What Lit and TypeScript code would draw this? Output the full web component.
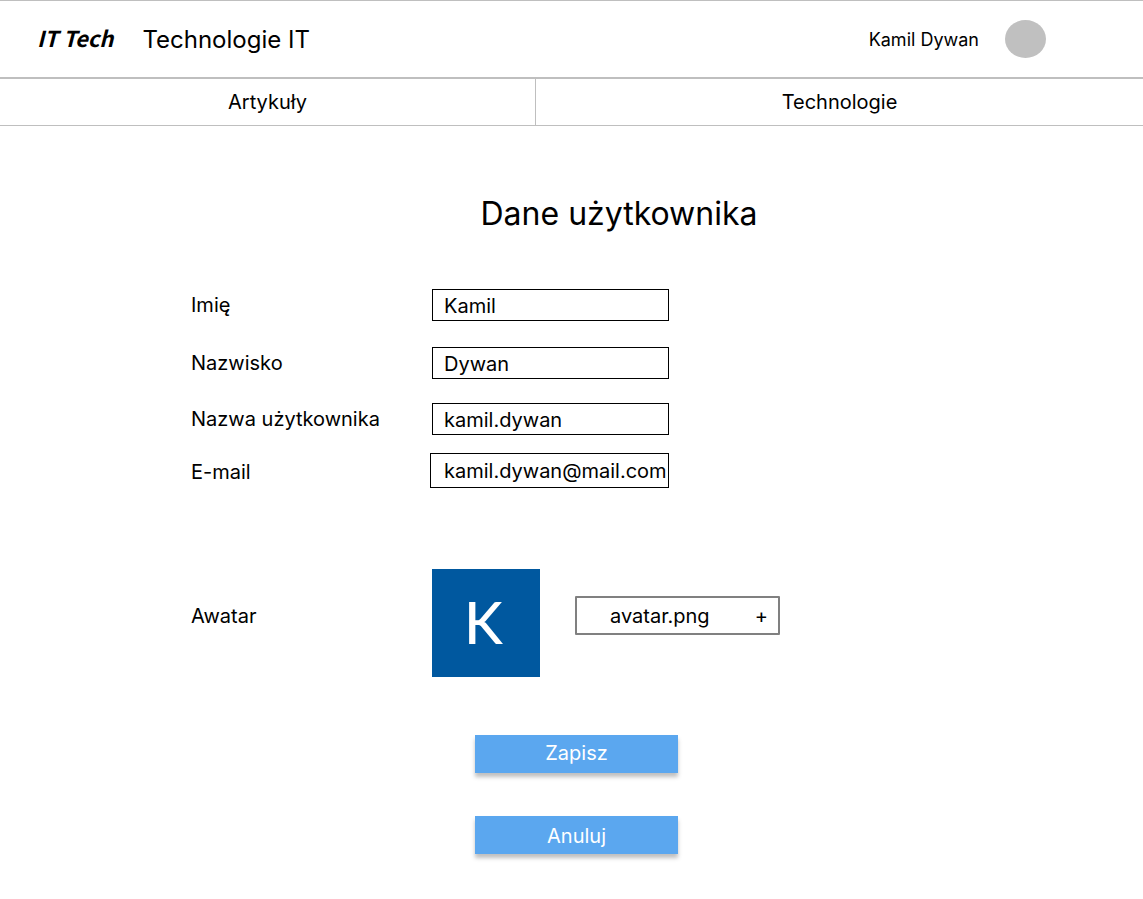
import { LitElement, html, css } from "lit";
import { customElement, state } from "lit/decorators.js";

interface Field {
  id: string;
  label: string;
  type: string;
  value: string;
}

const fields: Field[] = [
  { id: "first-name", label: "Imię", type: "text", value: "Kamil" },
  { id: "last-name", label: "Nazwisko", type: "text", value: "Dywan" },
  { id: "username", label: "Nazwa użytkownika", type: "text", value: "kamil.dywan" },
  { id: "email", label: "E-mail", type: "email", value: "kamil.dywan@mail.com" },
];

@customElement("app-header")
export class AppHeader extends LitElement {
  static styles = css`
    :host {
      display: block;
      font-family: Inter, sans-serif;
      color: #000;
    }
    .bar {
      display: flex;
      align-items: center;
      height: 76px;
      padding: 0 97px 0 37px;
      border-top: 1px solid #bfbfbf;
      border-bottom: 2px solid #bfbfbf;
    }
    .logo {
      padding-bottom: 5px;
      font: italic 700 22px/24px "Noto Sans CJK SC", sans-serif;
      color: #000;
      text-decoration: none;
    }
    .name {
      margin-left: 29px;
      padding-top: 2px;
      font-size: 24px;
      line-height: 30px;
    }
    .user {
      margin-left: auto;
      padding-top: 2px;
      font-size: 18px;
      line-height: 22px;
    }
    .face {
      width: 41px;
      height: 38px;
      margin-left: 26px;
      border-radius: 50%;
      background: #c0c0c0;
    }
    .nav {
      display: grid;
      grid-template-columns: 535fr 608fr;
      border-bottom: 1px solid #bfbfbf;
    }
    .link {
      font-size: 20px;
      line-height: 46px;
      text-align: center;
      color: #000;
      text-decoration: none;
    }
    .link + .link {
      border-left: 1px solid #bfbfbf;
    }
  `;

  render() {
    return html`
      <header>
        <div class="bar">
          <a class="logo" href="#">IT Tech</a>
          <span class="name">Technologie IT</span>
          <span class="user">Kamil Dywan</span>
          <span class="face"></span>
        </div>
        <nav class="nav">
          <a class="link" href="#artykuly">Artykuły</a>
          <a class="link" href="#technologie">Technologie</a>
        </nav>
      </header>
    `;
  }
}

@customElement("app-root")
export class AppRoot extends LitElement {
  static styles = css`
    :host {
      display: block;
      font-family: Inter, sans-serif;
      font-size: 20px;
      line-height: 24px;
      color: #000;
      background: #fff;
    }
    .main {
      padding: 68px 0 45px;
    }
    .title {
      margin: 0;
      padding-left: 95px;
      text-align: center;
      font-size: 32px;
      font-weight: 400;
      line-height: 40px;
    }
    .form {
      padding: 55px 16px 0 191px;
    }
    .row {
      display: grid;
      grid-template-columns: 241px 237px;
      align-items: center;
      margin-bottom: 26px;
    }
    .row.username {
      margin: -2px 0 18px;
    }
    .row.email {
      margin-bottom: 81px;
    }
    .input {
      box-sizing: border-box;
      width: 100%;
      height: 32px;
      margin: 0;
      padding: 2px 0 0 11px;
      border: 1px solid #000;
      border-radius: 0;
      background: #fff;
      font: inherit;
      color: inherit;
    }
    .email label {
      padding-top: 2px;
    }
    .email .input {
      width: 239px;
      height: 35px;
      margin-left: -2px;
      padding: 0 0 0 13px;
    }
    .avatar-row {
      display: grid;
      grid-template-columns: 241px 108px 240px;
      align-items: center;
    }
    .avatar-label {
      margin-bottom: 14px;
    }
    .avatar {
      display: flex;
      align-items: center;
      justify-content: center;
      box-sizing: border-box;
      width: 108px;
      height: 108px;
      padding: 0 5px 2px 0;
      background: #00589f;
      color: #fff;
      font-family: Lato, sans-serif;
      font-size: 58px;
      font-weight: 500;
    }
    .file {
      position: relative;
      display: flex;
      align-items: center;
      justify-content: space-between;
      box-sizing: border-box;
      height: 39px;
      margin: 0 0 15px 35px;
      padding: 0 10px 0 33px;
      border: 2px solid #808080;
      border-radius: 1px;
    }
    .file-input {
      position: absolute;
      inset: 0;
      width: 100%;
      opacity: 0;
      cursor: pointer;
    }
    .actions {
      display: grid;
      justify-content: center;
      gap: 43px;
      margin: 0 -16px 0 -191px;
      padding: 58px 0 0 10px;
    }
    .button {
      width: 203px;
      height: 38px;
      padding: 0;
      border: 0;
      background: #5ba7ef;
      box-shadow: 0 4px 4px rgba(0, 0, 0, 0.25);
      color: #fff;
      font: inherit;
    }
    .save {
      padding-bottom: 2px;
    }
    .cancel {
      padding-top: 2px;
    }
  `;

  @state() private fileName = "avatar.png";

  private pick(e: Event) {
    const file = (e.target as HTMLInputElement).files?.[0];
    if (file) this.fileName = file.name;
  }

  render() {
    return html`
      <app-header></app-header>
      <main class="main">
        <h1 class="title">Dane użytkownika</h1>
        <form class="form" @submit=${(e: Event) => e.preventDefault()}>
          ${fields.map(
            (f) => html`
              <div class="row ${f.id}">
                <label for=${f.id}>${f.label}</label>
                <input class="input" id=${f.id} name=${f.id} type=${f.type} .value=${f.value} />
              </div>
            `
          )}
          <div class="avatar-row">
            <label class="avatar-label" for="avatar">Awatar</label>
            <div class="avatar">K</div>
            <div class="file">
              <span>${this.fileName}</span>
              <span>+</span>
              <input class="file-input" id="avatar" type="file" accept="image/*" @change=${this.pick} />
            </div>
          </div>
          <div class="actions">
            <button class="button save" type="submit">Zapisz</button>
            <button class="button cancel" type="button">Anuluj</button>
          </div>
        </form>
      </main>
    `;
  }
}
